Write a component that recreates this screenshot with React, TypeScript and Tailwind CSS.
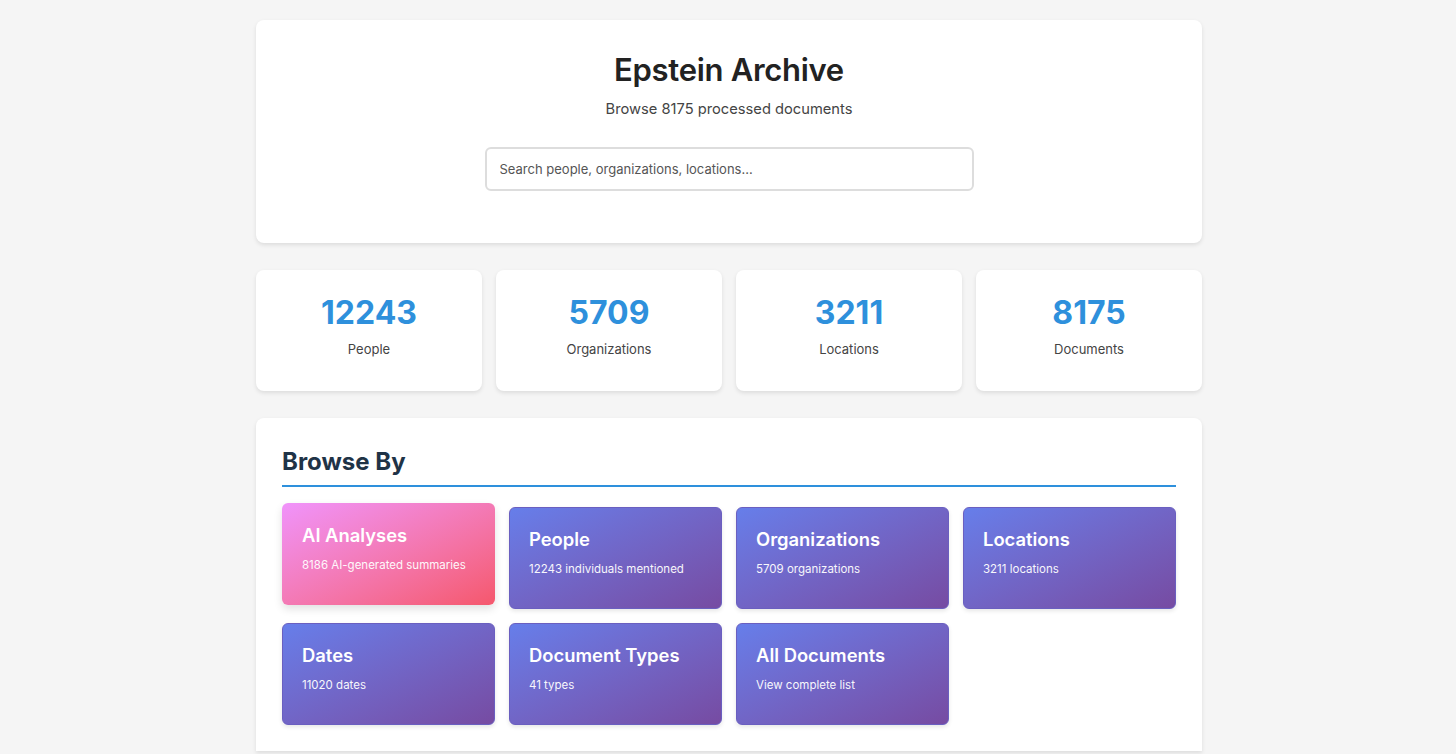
import React from "react";

const stats = [
  { n: "12243", l: "People" },
  { n: "5709", l: "Organizations" },
  { n: "3211", l: "Locations" },
  { n: "8175", l: "Documents" },
];

const cards = [
  { t: "People", s: "12243 individuals mentioned" },
  { t: "Organizations", s: "5709 organizations" },
  { t: "Locations", s: "3211 locations" },
  { t: "Dates", s: "11020 dates" },
  { t: "Document Types", s: "41 types" },
  { t: "All Documents", s: "View complete list" },
];

export default function App() {
  return (
    <div
      className="min-h-screen bg-[#f5f5f5] pt-5 pl-[2px]"
      style={{ fontFamily: "Inter, 'Noto Sans', sans-serif" }}
    >
      <div className="mx-auto w-[946px]">
        <div className="flex h-[223px] flex-col items-center rounded-lg bg-white pt-[32px] shadow-[0_2px_4px_rgba(0,0,0,0.1)]">
          <h1 className="text-[31px] font-semibold leading-[36px] tracking-[-0.3px] text-[#222]">
            Epstein Archive
          </h1>
          <p className="mt-[10px] text-[14.7px] leading-[22px] text-[#444]">
            Browse 8175 processed documents
          </p>
          <input
            className="mt-[27px] h-[44px] w-[489px] rounded-md border-2 border-[#ddd] px-[13px] text-[13px] text-[#333] placeholder:text-[#555] outline-none"
            placeholder="Search people, organizations, locations..."
          />
        </div>

        <div className="mt-[27px] grid grid-cols-4 gap-[14px]">
          {stats.map((s) => (
            <div
              key={s.l}
              className="flex h-[121px] flex-col items-center rounded-lg bg-white pt-[24px] shadow-[0_2px_4px_rgba(0,0,0,0.1)]"
            >
              <div className="text-[32px] font-bold leading-[38px] text-[#2e90dc]">
                {s.n}
              </div>
              <div className="mt-[7px] text-[13px] leading-[20px] text-[#444]">
                {s.l}
              </div>
            </div>
          ))}
        </div>

        <div className="mt-[27px] rounded-t-lg bg-white px-[26px] pt-[28px] pb-[26px] shadow-[0_2px_4px_rgba(0,0,0,0.1)]">
          <h2 className="border-b-2 border-[#2e90dc] pb-[7px] text-[24px] font-bold leading-[32px] text-[#1f3347]">
            Browse By
          </h2>
          <div className="mt-[20px] grid grid-cols-4 gap-[14px]">
            <div className="-mt-[4px] mb-[4px] h-[102px] rounded-md bg-gradient-to-br from-[#f093fb] to-[#f5576c] px-5 pt-[18px] text-white shadow-[0_4px_8px_rgba(0,0,0,0.12)]">
              <div className="text-[18.4px] font-semibold leading-[28px]">AI Analyses</div>
              <div className="mt-[7px] text-[11.5px] leading-[18px] opacity-95">
                8186 AI-generated summaries
              </div>
            </div>
            {cards.map((c) => (
              <div
                key={c.t}
                className="h-[102px] rounded-md border border-[#6a5fc0] bg-gradient-to-br from-[#667eea] to-[#764ba2] pl-[19px] pr-5 pt-[17px] text-white shadow-[0_2px_4px_rgba(0,0,0,0.1)]"
              >
                <div className="text-[18.4px] font-semibold leading-[28px]">{c.t}</div>
                <div className="mt-[7px] text-[11.5px] leading-[18px] opacity-95">
                  {c.s}
                </div>
              </div>
            ))}
          </div>
        </div>
      </div>
    </div>
  );
}
